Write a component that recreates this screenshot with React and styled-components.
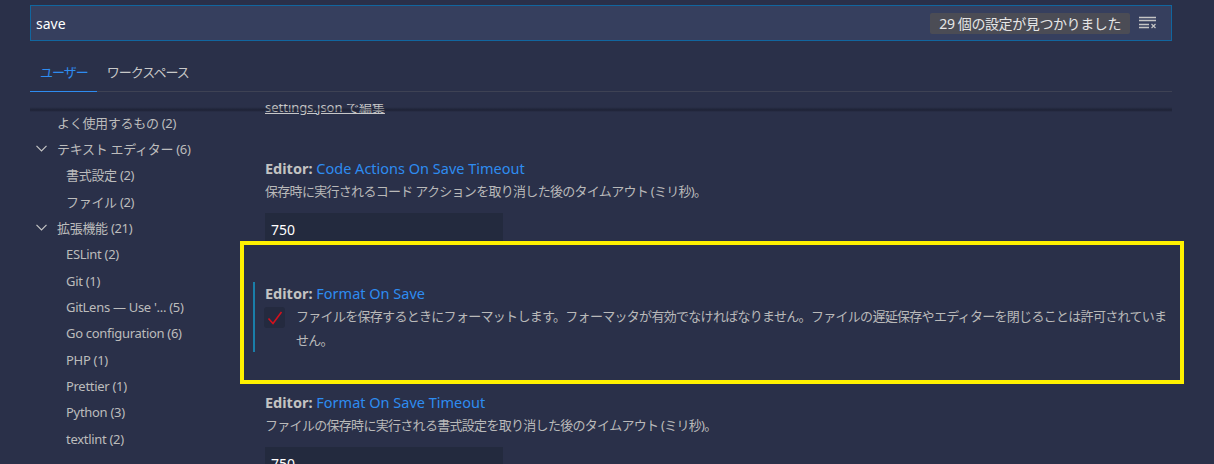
import React from "react";
import styled, { createGlobalStyle } from "styled-components";

const GlobalStyle = createGlobalStyle`
  html, body {
    margin: 0;
    padding: 0;
    background: #2a3049;
  }
  * {
    box-sizing: border-box;
  }
`;

const FONT = `"Noto Sans", "Noto Sans CJK JP", sans-serif`;

const Page = styled.div`
  height: 464px;
  overflow: hidden;
  padding: 5px 42px 0 30px;
  font-family: ${FONT};
  background: #2a3049;
`;

const SearchBar = styled.div`
  display: flex;
  align-items: center;
  height: 36px;
  padding: 0 14px 0 5px;
  background: #363f5e;
  border: 1px solid #11669f;
`;

const SearchText = styled.div`
  flex: 1;
  color: #ffffff;
  font-size: 14px;
`;

const CountBadge = styled.div`
  height: 21px;
  line-height: 21px;
  padding: 0 9px;
  margin-right: 9px;
  border-radius: 2px;
  background: #4b4c55;
  color: #e6e6e6;
  font-size: 14px;
  letter-spacing: -0.4px;
`;

const ClearButton = styled.div`
  display: flex;
  align-items: center;
  width: 18px;
  height: 18px;
  color: #c5c5c5;
`;

const TabBar = styled.div`
  display: flex;
  margin-top: 19px;
  border-bottom: 1px solid #3e4254;
`;

const Tab = styled.div`
  padding: 0 9px 7px 10px;
  line-height: 24px;
  font-size: 13px;
  letter-spacing: -1px;
  color: ${(p) => (p.$active ? "#2e8cf0" : "#c8c8c8")};
  border-bottom: 1px solid ${(p) => (p.$active ? "#2e8cf0" : "transparent")};
  margin-bottom: -1px;
`;

const Body = styled.div`
  position: relative;
  display: grid;
  grid-template-columns: 210px 1fr;
  margin-top: 12px;
  height: 360px;

  &::before {
    content: "";
    position: absolute;
    top: 3px;
    left: 0;
    right: 0;
    height: 5px;
    background: linear-gradient(to bottom, rgba(20, 23, 38, 0), rgba(20, 23, 38, 0.55) 60%, rgba(20, 23, 38, 0));
    z-index: 2;
    pointer-events: none;
  }
`;

const Sidebar = styled.div`
  padding-top: 5px;
  overflow: hidden;
`;

const TreeRow = styled.div`
  display: flex;
  align-items: center;
  height: 26.4px;
  padding-left: ${(p) => (p.$level === 1 ? 36 : 6)}px;
  color: #bcbcbc;
  font-size: 13px;
  letter-spacing: -0.3px;
  white-space: nowrap;
`;

const Twistie = styled.span`
  display: inline-flex;
  align-items: center;
  width: 21px;
  color: #c5c5c5;
`;

const Content = styled.div`
  overflow-x: visible;
  overflow-y: clip;
  min-width: 0;
`;

const LinkItem = styled.div`
  margin-top: -8px;
  padding: 0 0 21px 25px;
  line-height: 20px;
`;

const EditLink = styled.span`
  color: #c8c8c8;
  font-size: 13px;
  text-decoration: underline;
`;

const SettingItem = styled.div`
  position: relative;
  padding: 19px 0 20px 13px;

  ${(p) =>
    p.$highlighted &&
    `
    &::after {
      content: "";
      position: absolute;
      top: -22px;
      bottom: -12px;
      left: 0;
      right: -12px;
      border: 4px solid #fff100;
      pointer-events: none;
    }
  `}
`;

const ItemInner = styled.div`
  border-left: 2px solid ${(p) => (p.$focused ? "#1a7ea9" : "transparent")};
  padding-left: 10px;
`;

const Header = styled.div`
  line-height: 22px;
  font-size: 14.5px;
  white-space: nowrap;
`;

const Category = styled.span`
  color: #c3c3c3;
  font-weight: 700;
`;

const Label = styled.span`
  color: #2e8cf0;
`;

const Description = styled.div`
  color: #b9b9b9;
  font-size: 13px;
  line-height: 24px;
  letter-spacing: -0.7px;
`;

const NumberInput = styled.div`
  width: 238px;
  height: 30px;
  margin-top: 10px;
  padding: 4px 6px 0;
  line-height: 26px;
  background: #232a3e;
  color: #ffffff;
  font-size: 14px;
`;

const CheckRow = styled.div`
  display: flex;
  gap: 11px;
  margin-left: -1px;
`;

const Checkbox = styled.div`
  flex: none;
  display: flex;
  align-items: center;
  justify-content: center;
  width: 21px;
  height: 21px;
  margin-top: 3px;
  border-radius: 3px;
  background: #242a3f;
`;

const ClearFilterIcon = () => (
  <svg width="18" height="14" viewBox="0 0 18 14" fill="none" stroke="currentColor" strokeWidth="1.3">
    <path d="M0 1.5h17M0 4.5h17M0 8.5h10M0 11.5h10" />
    <path d="M12.5 8l4 4M16.5 8l-4 4" strokeWidth="1.2" />
  </svg>
);

const ChevronDown = () => (
  <svg width="11" height="7" viewBox="0 0 11 7" fill="none" stroke="currentColor" strokeWidth="1.2">
    <path d="M0.5 0.8l5 5 5-5" />
  </svg>
);

const CheckMark = () => (
  <svg width="16" height="14" viewBox="0 0 16 14" fill="none" stroke="#d4111d" strokeWidth="1.6">
    <path d="M1.5 7.5l4.5 5L14.5 1" />
  </svg>
);

const tree = [
  { label: "よく使用するもの (2)", level: 0 },
  { label: "テキスト エディター (6)", level: 0, open: true },
  { label: "書式設定 (2)", level: 1 },
  { label: "ファイル (2)", level: 1 },
  { label: "拡張機能 (21)", level: 0, open: true },
  { label: "ESLint (2)", level: 1 },
  { label: "Git (1)", level: 1 },
  { label: "GitLens — Use '...  (5)", level: 1 },
  { label: "Go configuration (6)", level: 1 },
  { label: "PHP (1)", level: 1 },
  { label: "Prettier (1)", level: 1 },
  { label: "Python (3)", level: 1 },
  { label: "textlint (2)", level: 1 },
];

export default function App() {
  return (
    <>
      <GlobalStyle />
      <Page>
        <SearchBar>
          <SearchText>save</SearchText>
          <CountBadge>29 個の設定が見つかりました</CountBadge>
          <ClearButton>
            <ClearFilterIcon />
          </ClearButton>
        </SearchBar>

        <TabBar>
          <Tab $active>ユーザー</Tab>
          <Tab>ワークスペース</Tab>
        </TabBar>

        <Body>
          <Sidebar>
            {tree.map((item) => (
              <TreeRow key={item.label} $level={item.level}>
                {item.level === 0 && <Twistie>{item.open && <ChevronDown />}</Twistie>}
                {item.label}
              </TreeRow>
            ))}
          </Sidebar>

          <Content>
            <LinkItem>
              <EditLink>settings.json で編集</EditLink>
            </LinkItem>

            <SettingItem>
              <ItemInner>
                <Header>
                  <Category>Editor: </Category>
                  <Label>Code Actions On Save Timeout</Label>
                </Header>
                <Description>保存時に実行されるコード アクションを取り消した後のタイムアウト (ミリ秒)。</Description>
                <NumberInput>750</NumberInput>
              </ItemInner>
            </SettingItem>

            <SettingItem $highlighted>
              <ItemInner $focused>
                <Header>
                  <Category>Editor: </Category>
                  <Label>Format On Save</Label>
                </Header>
                <CheckRow>
                  <Checkbox>
                    <CheckMark />
                  </Checkbox>
                  <Description>
                    ファイルを保存するときにフォーマットします。フォーマッタが有効でなければなりません。ファイルの遅延保存やエディターを閉じることは許可されていません。
                  </Description>
                </CheckRow>
              </ItemInner>
            </SettingItem>

            <SettingItem>
              <ItemInner>
                <Header>
                  <Category>Editor: </Category>
                  <Label>Format On Save Timeout</Label>
                </Header>
                <Description>ファイルの保存時に実行される書式設定を取り消した後のタイムアウト (ミリ秒)。</Description>
                <NumberInput>750</NumberInput>
              </ItemInner>
            </SettingItem>
          </Content>
        </Body>
      </Page>
    </>
  );
}
